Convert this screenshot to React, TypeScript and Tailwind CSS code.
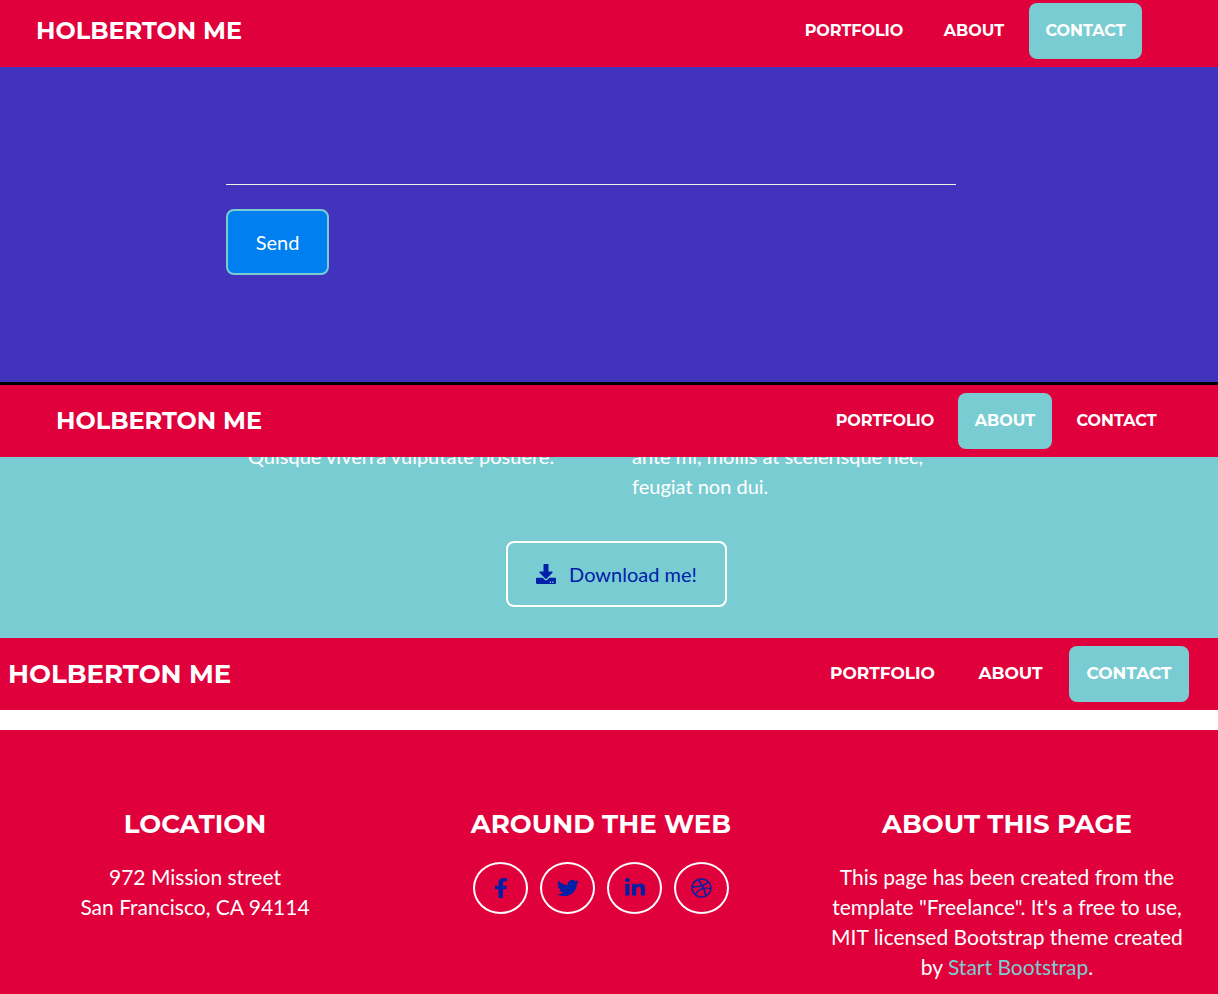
import React from "react";
import { FaDownload, FaDribbble, FaFacebookF, FaLinkedinIn, FaTwitter } from "react-icons/fa";

type Section = "Portfolio" | "About" | "Contact";

const heading = "font-['Montserrat','Inter',sans-serif] font-bold uppercase";

const links: { name: Section; normal: string; wide: string }[] = [
  { name: "Portfolio", normal: "min-w-[130px]", wide: "min-w-[139px]" },
  { name: "About", normal: "min-w-[94px]", wide: "min-w-[99px]" },
  { name: "Contact", normal: "min-w-[113px]", wide: "min-w-[120px]" },
];

function NavBar({ active, className, wide = false }: { active: Section; className: string; wide?: boolean }) {
  return (
    <nav className={`relative flex items-center justify-between bg-[#e0003b] text-white ${className}`}>
      <a href="#top" className={`${heading} ${wide ? "text-[26px]" : "text-2xl"} leading-9`}>
        Holberton Me
      </a>
      <ul className={`flex ${wide ? "gap-[9px]" : "gap-2"}`}>
        {links.map((link) => (
          <li key={link.name}>
            <a
              href={`#${link.name.toLowerCase()}`}
              className={`${heading} flex h-14 items-center justify-center rounded-lg ${
                wide ? `pb-0.5 text-[17px] ${link.wide}` : `text-base ${link.normal}`
              } ${link.name === active ? "bg-[#79cdd2]" : ""}`}
            >
              {link.name}
            </a>
          </li>
        ))}
      </ul>
    </nav>
  );
}

const socials = [
  { label: "Facebook", Icon: FaFacebookF, size: "h-5 w-[14px]" },
  { label: "Twitter", Icon: FaTwitter, size: "h-5 w-[22px]" },
  { label: "LinkedIn", Icon: FaLinkedinIn, size: "h-5 w-[20px]" },
  { label: "Dribbble", Icon: FaDribbble, size: "h-5 w-[21px]" },
];

export default function App() {
  return (
    <div className="flex min-h-screen flex-col bg-white font-['Lato',sans-serif] text-xl leading-[30px] text-white">
      <NavBar active="Contact" className="pt-[3px] pr-[76px] pb-2 pl-9" />
      <section id="contact" className="border-b-[3px] border-black bg-[#4133bc] pr-9 pb-[107px]">
        <form className="mx-auto max-w-[730px]" onSubmit={(e) => e.preventDefault()}>
          <textarea
            aria-label="Message"
            className="block h-[118px] w-full resize-none border-b border-[#edf0e4] bg-transparent outline-none"
          />
          <button
            type="submit"
            className="mt-6 h-[66px] min-w-[103px] rounded-lg border-2 border-[#79cdd2] bg-[#0080f0] px-[27px] text-xl"
          >
            Send
          </button>
        </form>
      </section>

      <NavBar active="About" className="py-2 pr-[45px] pl-14" />
      <section id="about" className="overflow-hidden bg-[#79cdd2] pb-[31px] pl-[15px]">
        <div className="mx-auto -mt-4 grid max-w-[737px] grid-cols-2 gap-[31px]">
          <p>Quisque viverra vulputate posuere.</p>
          <p>
            ante mi, mollis at scelerisque nec,
            <br />
            feugiat non dui.
          </p>
        </div>
        <div className="mt-10 flex justify-center">
          <a
            href="#download"
            className="flex h-[66px] items-center gap-[13px] rounded-lg border-2 border-white px-7 text-[#0020a8]"
          >
            <FaDownload className="size-5" />
            Download me!
          </a>
        </div>
      </section>

      <NavBar active="Contact" wide className="py-2 pr-[29px] pl-2" />
      <footer className="mt-5 flex-1 overflow-hidden bg-[#e0003b] pt-[78px]">
        <div className="mr-2 -ml-2 grid grid-cols-3 text-center text-[21px]">
          <div>
            <h4 className={`${heading} mb-[22px] text-[26px] leading-8`}>Location</h4>
            <p>
              972 Mission street
              <br />
              San Francisco, CA 94114
            </p>
          </div>
          <div>
            <h4 className={`${heading} mb-[22px] text-[26px] leading-8`}>Around the Web</h4>
            <ul className="flex justify-center gap-3">
              {socials.map(({ label, Icon, size }) => (
                <li key={label}>
                  <a
                    href={`#${label.toLowerCase()}`}
                    aria-label={label}
                    className="flex h-[52px] w-[55px] items-center justify-center rounded-[50%] border-2 border-white text-[#0020a8]"
                  >
                    <Icon preserveAspectRatio="none" className={size} />
                  </a>
                </li>
              ))}
            </ul>
          </div>
          <div>
            <h4 className={`${heading} mb-[22px] text-[26px] leading-8`}>About This Page</h4>
            <p className="mx-auto max-w-[364px]">
              This page has been created from the template "Freelance". It's a free to use, MIT licensed Bootstrap
              theme created by{" "}
              <a href="#start-bootstrap" className="text-[#79cdd2]">
                Start Bootstrap
              </a>
              .
            </p>
          </div>
        </div>
      </footer>
    </div>
  );
}
